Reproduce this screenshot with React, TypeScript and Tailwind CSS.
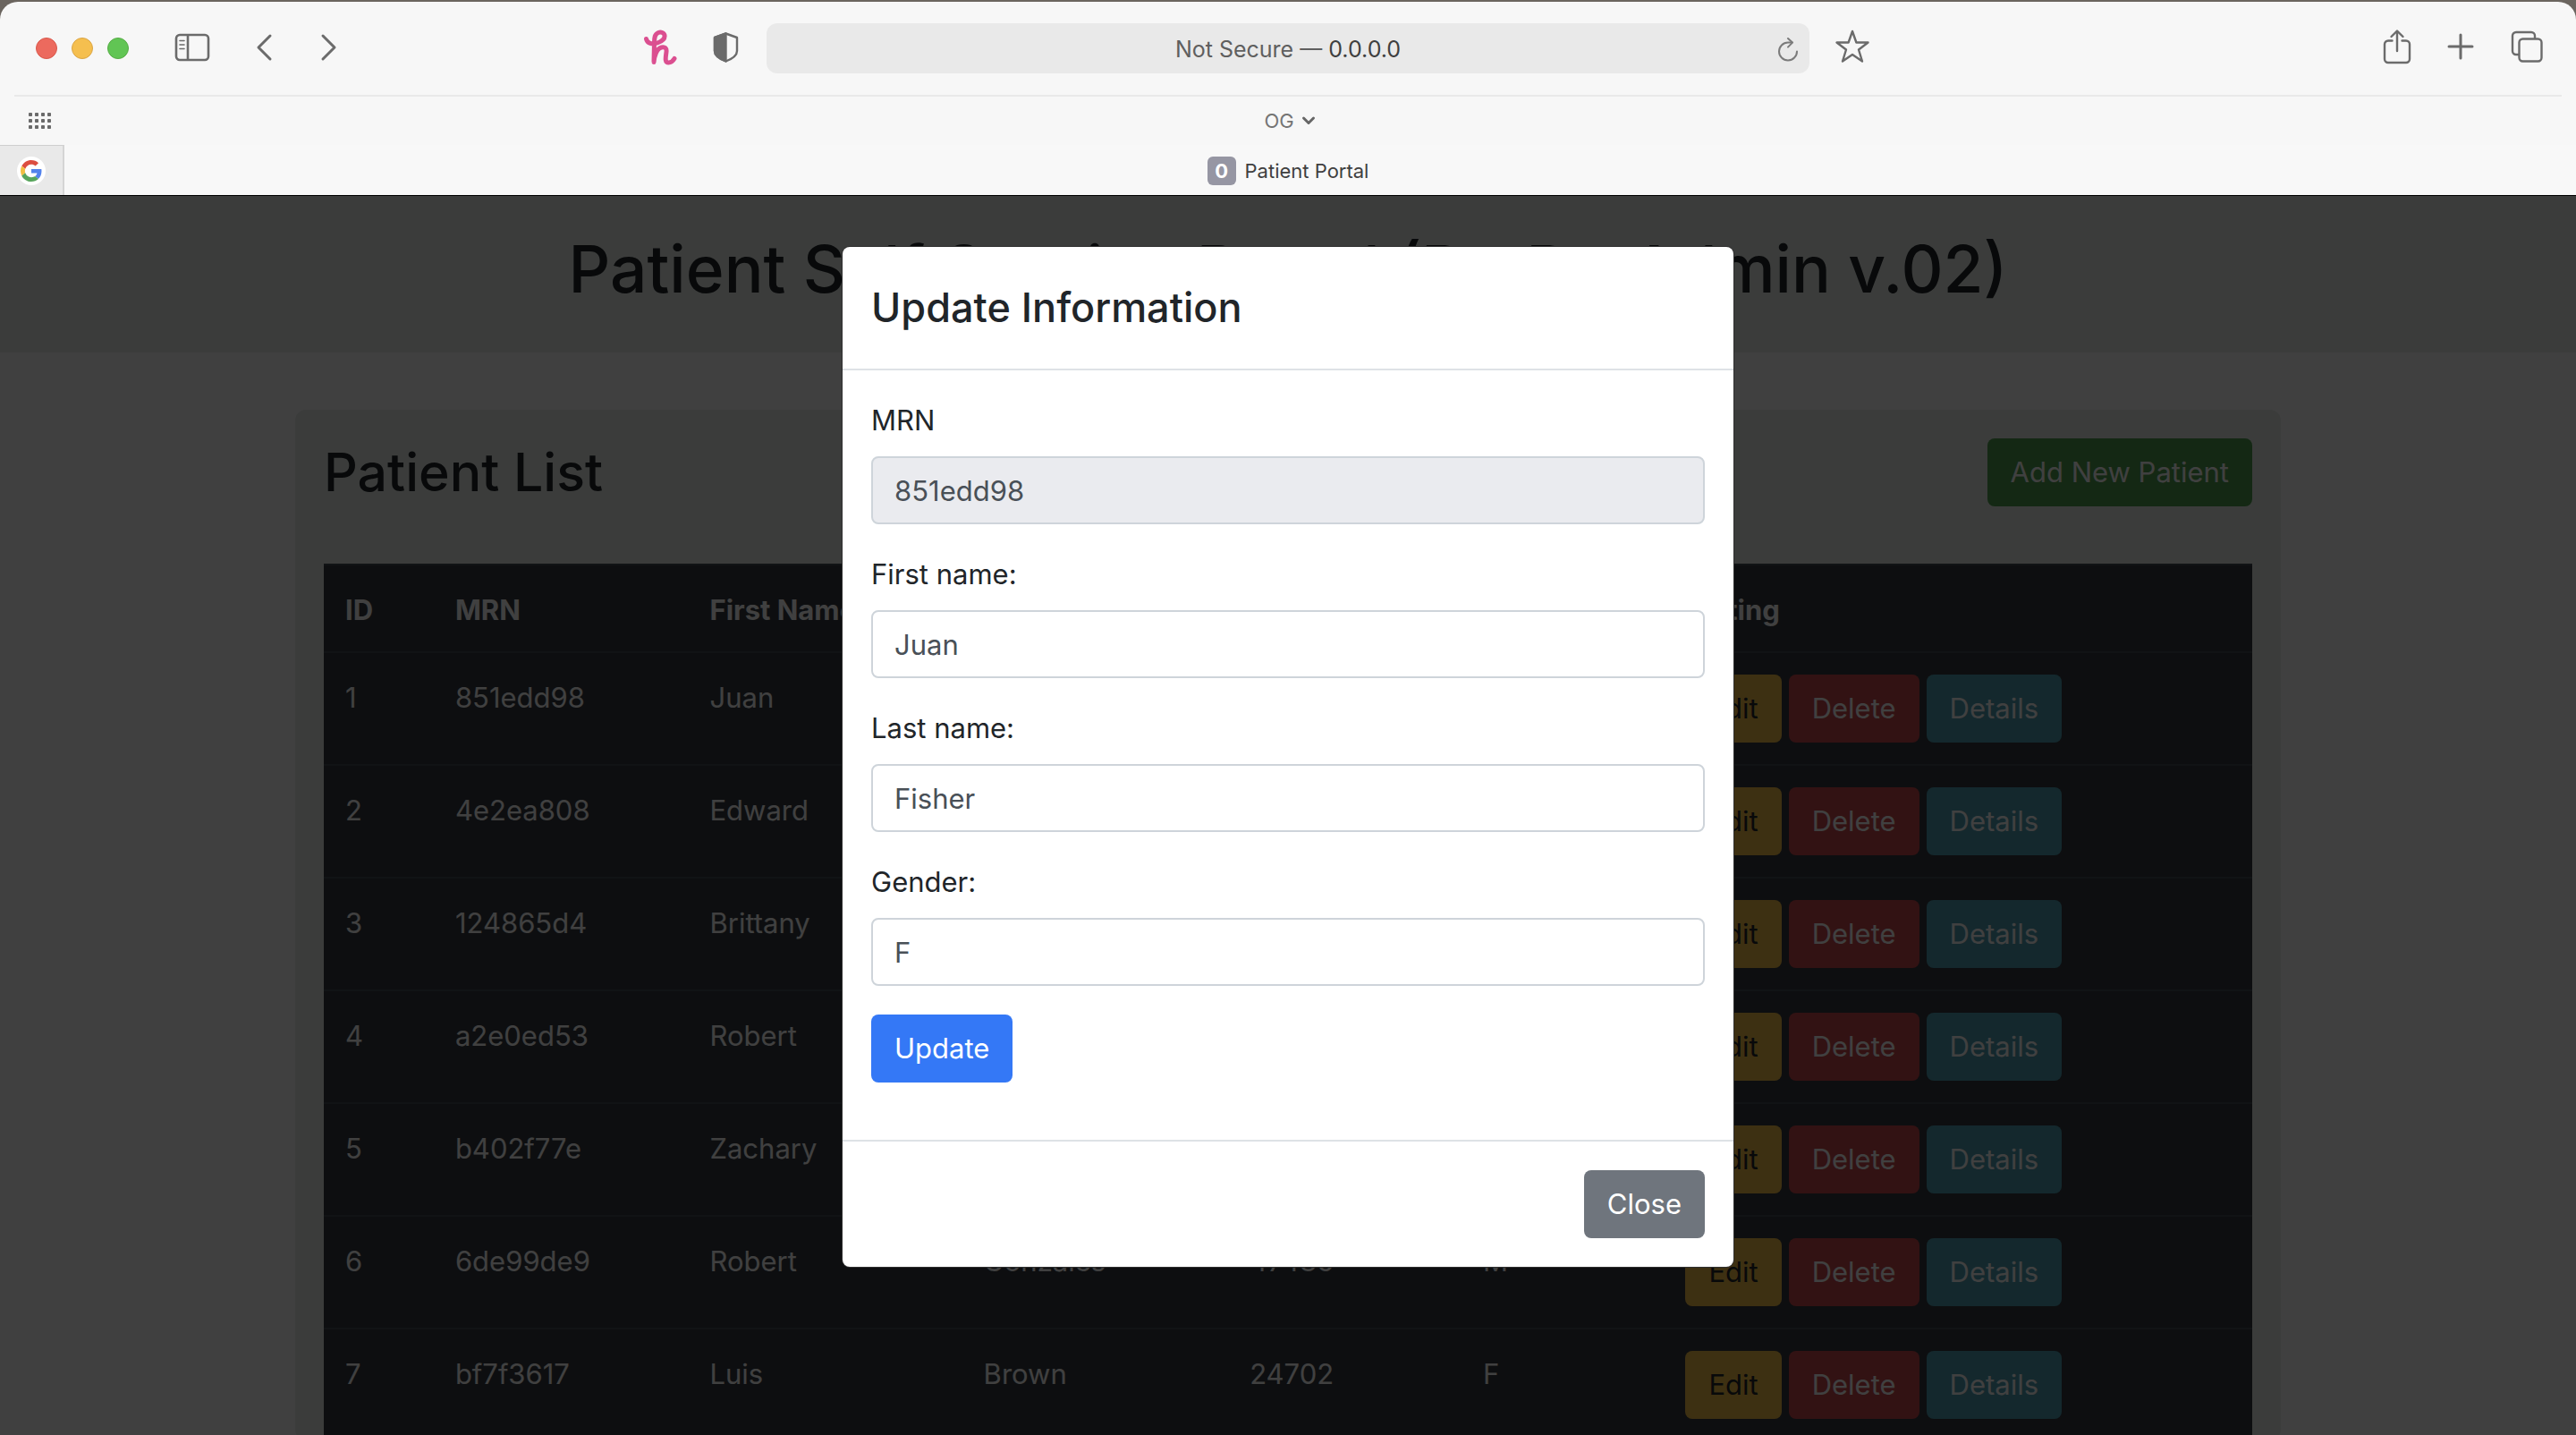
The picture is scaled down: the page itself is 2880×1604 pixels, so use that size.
import React from "react";

type Patient = { id: number; mrn: string; first: string; last: string; zip: string; gender: string };

const patients: Patient[] = [
  { id: 1, mrn: "851edd98", first: "Juan", last: "Fisher", zip: "36455", gender: "F" },
  { id: 2, mrn: "4e2ea808", first: "Edward", last: "Howard", zip: "80143", gender: "M" },
  { id: 3, mrn: "124865d4", first: "Brittany", last: "Farmer", zip: "55671", gender: "F" },
  { id: 4, mrn: "a2e0ed53", first: "Robert", last: "Curtis", zip: "21960", gender: "M" },
  { id: 5, mrn: "b402f77e", first: "Zachary", last: "Santos", zip: "73105", gender: "M" },
  { id: 6, mrn: "6de99de9", first: "Robert", last: "Gonzales", zip: "47486", gender: "M" },
  { id: 7, mrn: "bf7f3617", first: "Luis", last: "Brown", zip: "24702", gender: "F" },
];

const btn = "h-[76px] rounded-lg px-[26px] text-[31px] leading-[48px]";

function BrowserChrome() {
  return (
    <header className="relative z-20 shrink-0 rounded-t-[20px] border-b border-black bg-[#f7f7f7] text-[#6b6b6b]">
      <div className="mx-4 grid h-[106px] grid-cols-[1fr_1166px_1fr] items-center border-b-2 border-[#e9e9e9]">
        <div className="flex items-center pl-6">
          <div className="flex gap-4">
            <button aria-label="Close window" className="size-6 rounded-full border border-[#d9584b] bg-[#ec6a5e]" />
            <button aria-label="Minimize window" className="size-6 rounded-full border border-[#dba544] bg-[#f5bf4f]" />
            <button aria-label="Zoom window" className="size-6 rounded-full border border-[#56ac45] bg-[#61c554]" />
          </div>
          <div className="flex grow items-center pb-0.5">
            <button aria-label="Sidebar" className="ml-[51px]">
              <svg width="40" height="32" viewBox="0 0 40 32" fill="none" stroke="currentColor" strokeWidth="2.6">
                <rect x="2" y="2" width="36" height="28" rx="4" />
                <path d="M15 2v28" />
                <path d="M6 8.5h5M6 13h5M6 17.5h5" strokeWidth="1.6" strokeLinecap="round" />
              </svg>
            </button>
            <button aria-label="Back" className="ml-[51px]">
              <svg width="20" height="32" viewBox="0 0 20 32" fill="none" stroke="currentColor" strokeWidth="3" strokeLinecap="round" strokeLinejoin="round">
                <path d="M16 3L3 16l13 13" />
              </svg>
            </button>
            <button aria-label="Forward" className="ml-[51px]">
              <svg width="20" height="32" viewBox="0 0 20 32" fill="none" stroke="currentColor" strokeWidth="3" strokeLinecap="round" strokeLinejoin="round">
                <path d="M4 3l13 13L4 29" />
              </svg>
            </button>
            <div className="ml-auto flex items-center gap-10 pr-[31px]">
              <button aria-label="Honey">
                <svg width="38" height="40" viewBox="0 0 38 40" fill="none" stroke="#db4f90" strokeWidth="5" strokeLinecap="round" strokeLinejoin="round">
                  <path d="M3.500 10.500C4.500 15.500 10 17 16 15C21.500 13 24.500 10 24 6.500C23.500 3.500 20 2.500 17 3.500C13 5 12.500 9 12.500 15L12 36.500C12.500 30 15 21.500 20.500 20C24.500 19 26.500 21 26 25C25.500 30 23.500 37 28.500 37C31.500 37 33.500 35 35 32.500" />
                </svg>
              </button>
              <button aria-label="Privacy report">
                <svg width="29" height="34" viewBox="0 0 29 34" fill="none" stroke="currentColor" strokeWidth="2.400" strokeLinejoin="round">
                  <path d="M14.500 1.500L27 6v15c0 5-6 9-12.500 11.500C8 30 2 26 2 21V6z" />
                  <path d="M14.500 1.500v31C8 30 2 26 2 21V6z" fill="currentColor" />
                </svg>
              </button>
            </div>
          </div>
        </div>
        <div className="relative flex h-14 items-center justify-center rounded-xl bg-[#e9e9e9] pt-1 text-[25px]">
          <span className="text-[#5f5f5f]">Not Secure — <span className="text-[#3f3f3f]">0.0.0.0</span></span>
          <button aria-label="Reload" className="absolute right-3">
            <svg width="24" height="28" viewBox="0 0 24 28" fill="none" stroke="#7b7b7b" strokeWidth="2" strokeLinecap="round" strokeLinejoin="round">
              <path d="M22 15.500A10 10 0 1 1 12 5.500h4.500" />
              <path d="M12 1l5 4.600-5 5" />
            </svg>
          </button>
        </div>
        <div className="flex items-center pb-1 pl-7">
          <button aria-label="Add bookmark">
            <svg width="40" height="38" viewBox="0 0 40 38" fill="none" stroke="currentColor" strokeWidth="2.400" strokeLinejoin="round">
              <path d="M20 2l4.400 12.500H37.500L27 22.500l4 13L20 28 9 35.500l4-13L2.500 14.500h13.100z" />
            </svg>
          </button>
          <div className="ml-auto flex items-center pr-5">
            <button aria-label="Share">
              <svg width="32" height="40" viewBox="0 0 32 40" fill="none" stroke="currentColor" strokeWidth="2.400" strokeLinecap="round" strokeLinejoin="round">
                <path d="M10.500 13.500H6a4 4 0 0 0-4 4V34a4 4 0 0 0 4 4h20a4 4 0 0 0 4-4V17.500a4 4 0 0 0-4-4h-4.500" />
                <path d="M16 25V3M9.500 9L16 2.500 22.500 9" />
              </svg>
            </button>
            <button aria-label="New tab" className="ml-10">
              <svg width="30" height="32" viewBox="0 0 30 32" fill="none" stroke="currentColor" strokeWidth="3" strokeLinecap="round">
                <path d="M15 3v26M2 16h26" />
              </svg>
            </button>
            <button aria-label="Tab overview" className="ml-10">
              <svg width="38" height="36" viewBox="0 0 38 36" fill="none" stroke="currentColor" strokeWidth="2.400" strokeLinejoin="round">
                <rect x="10.500" y="9.500" width="25" height="25" rx="4" />
                <path d="M10.500 27H7a4 4 0 0 1-4-4V6a4 4 0 0 1 4-4h17a4 4 0 0 1 4 4v3.500" />
              </svg>
            </button>
          </div>
        </div>
      </div>
      <nav className="grid h-[54px] grid-cols-[1fr_auto_1fr] items-center px-8">
        <button aria-label="Show bookmarks" className="justify-self-start">
          <svg width="26" height="18" viewBox="0 0 26 18" fill="currentColor">
            {[0, 7, 14].map((y) => [0, 7, 14, 21].map((x) => <rect key={x + "-" + y} x={x} y={y} width="4" height="4" rx="0.800" />))}
          </svg>
        </button>
        <button className="flex items-center gap-2 pl-1 text-[22px] text-[#757575]">
          OG
          <svg width="16" height="12" viewBox="0 0 16 12" fill="none" stroke="#666" strokeWidth="3" strokeLinecap="round" strokeLinejoin="round">
            <path d="M2.500 3L8 8.500 13.500 3" />
          </svg>
        </button>
      </nav>
      <div className="flex h-14 bg-[#f8f8f8]">
        <button aria-label="Google" className="flex w-[72px] items-center justify-center border-t border-r-2 border-t-[#cfcfcf] border-r-[#d5d5d5] bg-[#e9e9e9]">
          <span className="flex size-8 items-center justify-center rounded-full bg-white">
            <svg width="24" height="24" viewBox="0 0 48 48">
              <path fill="#dc4e41" d="M24 9.500c3.540 0 6.710 1.220 9.210 3.600l6.850-6.850C35.900 2.380 30.470 0 24 0 14.620 0 6.510 5.380 2.560 13.220l7.980 6.190C12.430 13.720 17.740 9.500 24 9.500z" />
              <path fill="#5383ec" d="M46.980 24.550c0-1.570-.15-3.090-.38-4.550H24v9.020h12.940c-.58 2.960-2.260 5.480-4.780 7.180l7.730 6c4.510-4.180 7.090-10.360 7.090-17.650z" />
              <path fill="#f2be42" d="M10.530 28.590c-.48-1.450-.76-2.990-.76-4.590s.27-3.140.76-4.590l-7.980-6.190C.92 16.460 0 20.120 0 24c0 3.880.92 7.540 2.560 10.780l7.970-6.190z" />
              <path fill="#58a55c" d="M24 48c6.480 0 11.930-2.130 15.890-5.810l-7.730-6c-2.150 1.450-4.920 2.300-8.160 2.300-6.260 0-11.570-4.220-13.470-9.910l-7.980 6.190C6.510 42.620 14.620 48 24 48z" />
            </svg>
          </span>
        </button>
        <button className="flex grow items-center justify-center gap-2.5 pt-0.5 pr-[72px] text-[22px] text-[#3f3f3f]">
          <span className="flex size-8 items-center justify-center rounded-md bg-[#9696a3] font-bold text-white">0</span>
          Patient Portal
        </button>
      </div>
    </header>
  );
}

function PatientTable() {
  const cell = "border-t-2 border-[#454d55] px-6 pt-[26px] pb-[22px]";
  const actions = "border-t-2 border-[#454d55] p-6";
  return (
    <table className="w-full table-fixed border-collapse bg-[#343a40] text-left align-top text-[31px] leading-[48px] text-white">
      <colgroup>
        <col className="w-[5.700%]" />
        <col className="w-[13.200%]" />
        <col className="w-[14.200%]" />
        <col className="w-[13.800%]" />
        <col className="w-[12.100%]" />
        <col className="w-[10.500%]" />
        <col />
      </colgroup>
      <thead>
        <tr>
          {["ID", "MRN", "First Name", "Last Name", "Zip Code", "Gender", "Editing"].map((h) => (
            <th key={h} scope="col" className={`${cell} whitespace-nowrap font-bold`}>{h}</th>
          ))}
        </tr>
      </thead>
      <tbody>
        {patients.map((p) => (
          <tr key={p.id} className="align-top">
            {[p.id, p.mrn, p.first, p.last, p.zip, p.gender].map((v, i) => (
              <td key={i} className={cell}>{v}</td>
            ))}
            <td className={actions}>
              <div className="flex gap-2">
                <button className={`${btn} bg-[#f4c048] text-[#212529]`}>Edit</button>
                <button className={`${btn} bg-[#c8484c]`}>Delete</button>
                <button className={`${btn} bg-[#50a0b4]`}>Details</button>
              </div>
            </td>
          </tr>
        ))}
      </tbody>
    </table>
  );
}

function Field({ id, label, value, readOnly }: { id: string; label: string; value: string; readOnly?: boolean }) {
  return (
    <div className="mb-8 flex flex-col gap-4">
      <label htmlFor={id} className="leading-[48px]">{label}</label>
      <input
        id={id}
        defaultValue={value}
        readOnly={readOnly}
        className="h-[76px] rounded-lg border-2 border-[#ced4da] bg-white px-6 text-[#495057] read-only:bg-[#eaebef]"
      />
    </div>
  );
}

function UpdateDialog() {
  return (
    <section role="dialog" aria-label="Update Information" className="w-[996px] rounded-lg bg-white text-[31px] text-[#212529] shadow-[0_0_0_1px_#2f2f2f]">
      <div className="border-b-2 border-[#dee2e6] p-8">
        <h4 className="text-[45px] font-medium leading-[72px]">Update Information</h4>
      </div>
      <form className="p-8 pb-16" onSubmit={(e) => e.preventDefault()}>
        <Field id="mrn" label="MRN" value="851edd98" readOnly />
        <Field id="first" label="First name:" value="Juan" />
        <Field id="last" label="Last name:" value="Fisher" />
        <Field id="gender" label="Gender:" value="F" />
        <button type="submit" className={`${btn} bg-[#3478f6] text-white`}>Update</button>
      </form>
      <div className="flex justify-end border-t-2 border-[#dee2e6] p-8">
        <button className={`${btn} bg-[#6f757d] text-white`}>Close</button>
      </div>
    </section>
  );
}

export default function App() {
  return (
    <div className="flex h-screen flex-col overflow-hidden bg-[#6b655f] pt-0.5 font-['Inter',sans-serif]">
      <BrowserChrome />
      <main className="relative min-h-0 grow overflow-hidden bg-white text-[#212529]">
        <div className="bg-[#e9f0eb] pt-8 pb-11">
          <h1 className="text-center text-[73px] font-medium leading-[99px]">Patient Self Service Portal (Dr. Dr. Admin v.02)</h1>
        </div>
        <div className="mx-auto mt-16 w-[2220px] max-w-full rounded-xl bg-[#e9f0eb] px-8 pt-8">
          <div className="mb-16 flex items-center justify-between">
            <h2 className="text-[59px] font-medium leading-[76px]">Patient List</h2>
            <button className={`${btn} bg-[#50a050] text-white`}>Add New Patient</button>
          </div>
          <PatientTable />
        </div>
        <div className="absolute inset-0 flex items-start justify-center bg-black/75 pt-[57px]">
          <UpdateDialog />
        </div>
      </main>
    </div>
  );
}
